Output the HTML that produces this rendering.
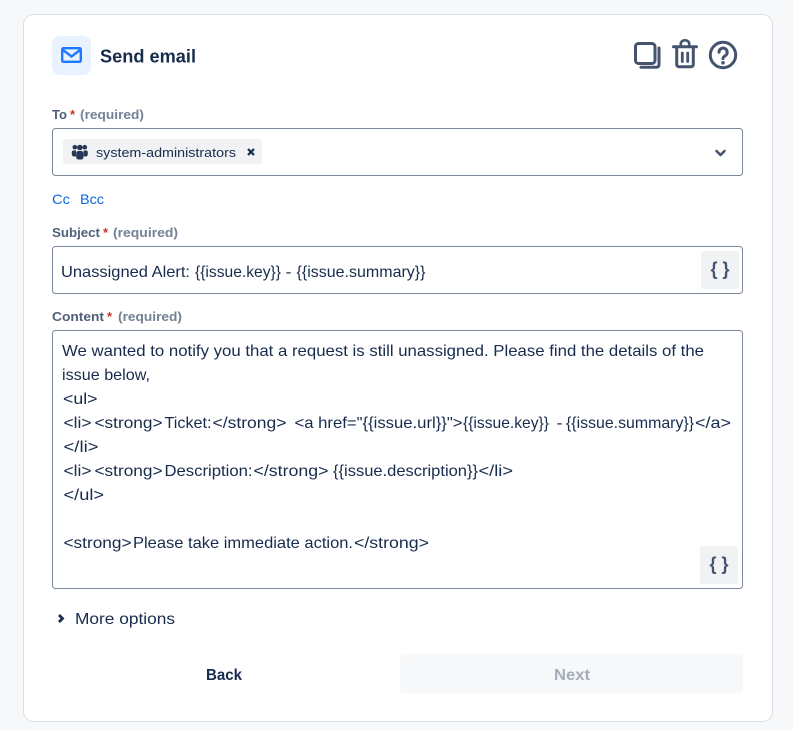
<!DOCTYPE html>
<html lang="en">
<head>
<meta charset="utf-8">
<title>Send email</title>
<style>
html,body{margin:0;padding:0;background:#f7f8f9;width:793px;height:730px;overflow:hidden}
svg{display:block}
text{font-family:"Liberation Sans",Arial,sans-serif;white-space:pre}
.c{font-size:16px;fill:#172b4d}
.l{font-size:13px;font-weight:700;fill:#505f79}
.r{font-size:13px;font-weight:700;fill:#758195}
.s{font-size:13px;font-weight:700;fill:#c9372c}
.a{font-size:14px;fill:#0c66e4}
.box{fill:#fff;stroke:#7a869a;stroke-width:1}
.btn{fill:#f1f2f4}
.b{font-size:18px;font-weight:700;fill:#44546f}
.ic{fill:none;stroke:#44546f;stroke-linecap:round;stroke-linejoin:round}
</style>
</head>
<body>
<svg width="793" height="730" viewBox="0 0 793 730" xmlns="http://www.w3.org/2000/svg">
  <rect x="23.5" y="14.5" width="749" height="707" rx="10" fill="#fff" stroke="#dcdfe4"/>

  <!-- header -->
  <rect x="52" y="36" width="39" height="39" rx="8" fill="#e9f2ff"/>
  <rect x="62.2" y="48.200" width="18.600" height="13.600" rx="1.200" fill="none" stroke="#1d7afc" stroke-width="2.400"/>
  <path d="M63 50l8.500 6.500L80 50" fill="none" stroke="#1d7afc" stroke-width="2.400"/>
  <text x="100" y="62.500" font-size="18" font-weight="700" fill="#172b4d" textLength="96" lengthAdjust="spacingAndGlyphs">Send email</text>

  <!-- copy -->
  <rect x="635.500" y="43.500" width="19.500" height="20" rx="3" class="ic" stroke-width="3"/>
  <path d="M659 48v16.800a2.500 2.500 0 0 1-2.500 2.500H641" class="ic" stroke-width="3"/>
  <!-- trash -->
  <path d="M673.500 46.800h23" class="ic" stroke-width="3"/>
  <path d="M680.800 46v-2.500a4.200 3.200 0 0 1 8.400 0V46" class="ic" stroke-width="2.600"/>
  <path d="M676.700 47v17.500a2.300 2.300 0 0 0 2.300 2.300h12a2.300 2.300 0 0 0 2.300-2.300V47" class="ic" stroke-width="3"/>
  <path d="M682.300 53v8.500M687.700 53v8.500" class="ic" stroke-width="2.800" stroke-linecap="butt"/>
  <!-- help -->
  <circle cx="723" cy="55" r="12.700" class="ic" stroke-width="3"/>
  <path d="M719 52.200a4.100 4.100 0 1 1 6.400 3.400c-1.500 1-2.400 1.500-2.400 3" class="ic" stroke-width="3"/>
  <circle cx="723" cy="62.800" r="1.800" fill="#44546f"/>

  <!-- To -->
  <text x="52" y="119" class="l" textLength="15" lengthAdjust="spacingAndGlyphs">To</text>
  <text x="70" y="119" class="s">*</text>
  <text x="80" y="119" class="r" textLength="64" lengthAdjust="spacingAndGlyphs">(required)</text>
  <rect x="52.500" y="128.500" width="690" height="47" rx="3" class="box"/>
  <rect x="63" y="139" width="199" height="25" rx="3" fill="#f1f2f4"/>
  <g fill="#253858">
    <circle cx="79.800" cy="147.500" r="2.800"/>
    <circle cx="74.800" cy="147.200" r="2.300"/>
    <circle cx="84.800" cy="147.200" r="2.300"/>
    <path d="M73.500 150.500h2.500v6h-2a2.200 2.200 0 0 1-2.200-2.200v-2a1.800 1.800 0 0 1 1.700-1.800zM83.600 150.500h2.500a1.800 1.800 0 0 1 1.700 1.800v2a2.200 2.200 0 0 1-2.200 2.200h-2z"/>
    <rect x="76.200" y="151" width="7.200" height="8.500" rx="2.200"/>
  </g>
  <text x="96" y="157" font-size="13" fill="#172b4d" textLength="140" lengthAdjust="spacingAndGlyphs">system-administrators</text>
  <path d="M248 149l6 6M254 149l-6 6" fill="none" stroke="#172b4d" stroke-width="2.200"/>
  <path d="M716.500 151l4 4 4-4" fill="none" stroke="#44546f" stroke-width="2.600" stroke-linecap="round" stroke-linejoin="round"/>

  <text x="52" y="204" class="a" textLength="18" lengthAdjust="spacingAndGlyphs">Cc</text>
  <text x="80" y="204" class="a" textLength="24" lengthAdjust="spacingAndGlyphs">Bcc</text>

  <!-- Subject -->
  <text x="52" y="237" class="l" textLength="48" lengthAdjust="spacingAndGlyphs">Subject</text>
  <text x="103" y="237" class="s">*</text>
  <text x="113" y="237" class="r" textLength="65" lengthAdjust="spacingAndGlyphs">(required)</text>
  <rect x="52.500" y="246.500" width="690" height="47" rx="3" class="box"/>
  <text x="61" y="277" class="c" textLength="129" lengthAdjust="spacingAndGlyphs">Unassigned Alert:</text>
  <text x="195" y="277" class="c" textLength="86" lengthAdjust="spacingAndGlyphs">{{issue.key}}</text>
  <text x="285.500" y="277" class="c" textLength="6" lengthAdjust="spacingAndGlyphs">-</text>
  <text x="296.500" y="277" class="c" textLength="129" lengthAdjust="spacingAndGlyphs">{{issue.summary}}</text>
  <rect x="701" y="251" width="38" height="38" rx="3" class="btn"/>
  <text x="710.500" y="275" class="b">{</text>
  <text x="722.500" y="275" class="b">}</text>

  <!-- Content -->
  <text x="52" y="321" class="l" textLength="52" lengthAdjust="spacingAndGlyphs">Content</text>
  <text x="107" y="321" class="s">*</text>
  <text x="118" y="321" class="r" textLength="64" lengthAdjust="spacingAndGlyphs">(required)</text>
  <rect x="52.500" y="330.500" width="690" height="258" rx="3" class="box"/>
  <text x="62" y="356" class="c" textLength="642" lengthAdjust="spacingAndGlyphs">We wanted to notify you that a request is still unassigned. Please find the details of the</text>
  <text x="62" y="380" class="c" textLength="88" lengthAdjust="spacingAndGlyphs">issue below,</text>
  <text x="63" y="404" class="c" textLength="34.500" lengthAdjust="spacingAndGlyphs">&lt;ul&gt;</text>

  <text x="63.500" y="428" class="c" textLength="28" lengthAdjust="spacingAndGlyphs">&lt;li&gt;</text>
  <text x="94.500" y="428" class="c" textLength="68" lengthAdjust="spacingAndGlyphs">&lt;strong&gt;</text>
  <text x="164.500" y="428" class="c" textLength="47" lengthAdjust="spacingAndGlyphs">Ticket:</text>
  <text x="212.500" y="428" class="c" textLength="74" lengthAdjust="spacingAndGlyphs">&lt;/strong&gt;</text>
  <text x="294.500" y="428" class="c" textLength="168" lengthAdjust="spacingAndGlyphs">&lt;a href="{{issue.url}}"&gt;</text>
  <text x="463" y="428" class="c" textLength="86" lengthAdjust="spacingAndGlyphs">{{issue.key}}</text>
  <text x="556.500" y="428" class="c" textLength="6" lengthAdjust="spacingAndGlyphs">-</text>
  <text x="566" y="428" class="c" textLength="128" lengthAdjust="spacingAndGlyphs">{{issue.summary}}</text>
  <text x="695" y="428" class="c" textLength="36" lengthAdjust="spacingAndGlyphs">&lt;/a&gt;</text>

  <text x="63.500" y="452" class="c" textLength="35" lengthAdjust="spacingAndGlyphs">&lt;/li&gt;</text>

  <text x="63.500" y="476" class="c" textLength="28" lengthAdjust="spacingAndGlyphs">&lt;li&gt;</text>
  <text x="94.500" y="476" class="c" textLength="68" lengthAdjust="spacingAndGlyphs">&lt;strong&gt;</text>
  <text x="164.500" y="476" class="c" textLength="88" lengthAdjust="spacingAndGlyphs">Description:</text>
  <text x="253.500" y="476" class="c" textLength="75" lengthAdjust="spacingAndGlyphs">&lt;/strong&gt;</text>
  <text x="333" y="476" class="c" textLength="145" lengthAdjust="spacingAndGlyphs">{{issue.description}}</text>
  <text x="478.500" y="476" class="c" textLength="34.500" lengthAdjust="spacingAndGlyphs">&lt;/li&gt;</text>

  <text x="63.500" y="500" class="c" textLength="40.500" lengthAdjust="spacingAndGlyphs">&lt;/ul&gt;</text>

  <text x="63.500" y="548" class="c" textLength="68" lengthAdjust="spacingAndGlyphs">&lt;strong&gt;</text>
  <text x="133" y="548" class="c" textLength="220" lengthAdjust="spacingAndGlyphs">Please take immediate action.</text>
  <text x="354" y="548" class="c" textLength="75" lengthAdjust="spacingAndGlyphs">&lt;/strong&gt;</text>

  <rect x="700" y="546" width="38" height="38" rx="3" class="btn"/>
  <text x="709.500" y="570" class="b">{</text>
  <text x="721.500" y="570" class="b">}</text>

  <!-- More options -->
  <path d="M59 615l3.500 3.500-3.500 3.500" fill="none" stroke="#172b4d" stroke-width="2.800" stroke-linejoin="miter"/>
  <text x="75" y="624" class="c" textLength="100" lengthAdjust="spacingAndGlyphs">More options</text>

  <!-- Footer -->
  <text x="206" y="680" font-size="16" font-weight="700" fill="#172b4d" textLength="36" lengthAdjust="spacingAndGlyphs">Back</text>
  <rect x="400" y="654" width="343" height="39" rx="3" fill="#f7f8f9"/>
  <text x="554" y="680" font-size="16" font-weight="700" fill="#a5adba" textLength="36" lengthAdjust="spacingAndGlyphs">Next</text>
</svg>
</body>
</html>
